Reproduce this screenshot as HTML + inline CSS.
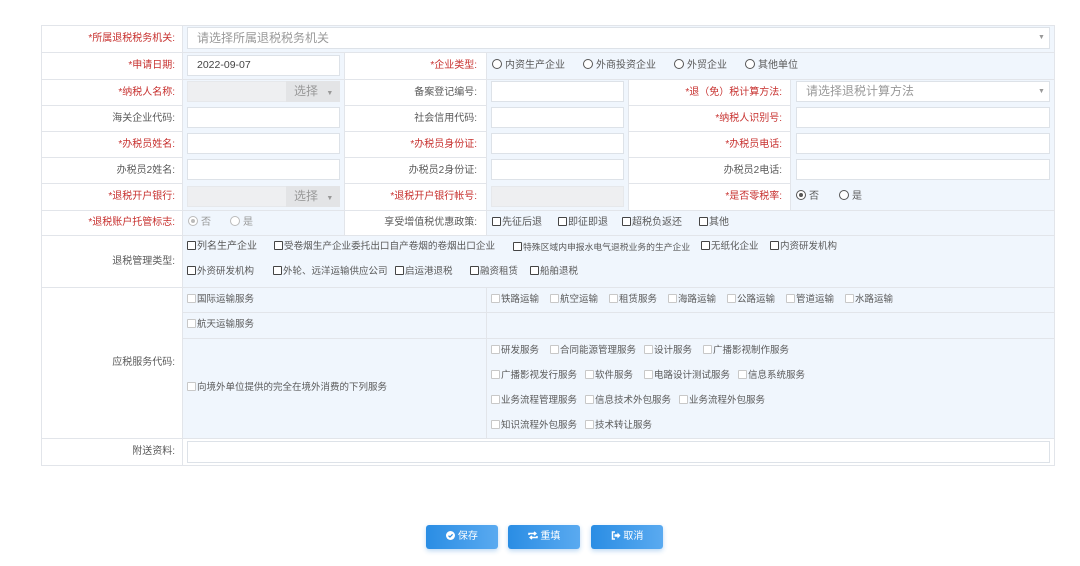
<!DOCTYPE html><html><head><meta charset="utf-8"><style>
*{box-sizing:border-box;margin:0;padding:0}
body{width:1080px;height:566px;background:#fff;position:relative;overflow:hidden;font-family:"Liberation Sans","Noto Sans CJK SC",sans-serif;font-size:10px;color:#5a5a5a}
.c{position:absolute;border:1px solid #e2e5ea;background:#fff}
.v{background:#f0f6fd}
.l{position:absolute;text-align:right;white-space:nowrap}
.r{color:#c7302e}
.t{position:absolute;white-space:nowrap}
.in{position:absolute;background:#fff;border:1px solid #dde2e8}
.dis{background:#eeeff1;border-color:#e6e8eb}
.cb{display:inline-block;width:9px;height:9px;border:1px solid #444;border-radius:1px;vertical-align:-1px;margin-right:1px;background:#fff}
.cd{border-color:#c8c8c8}
.rd{display:inline-block;width:10px;height:10px;border:1px solid #555;border-radius:50%;vertical-align:-1px;margin-right:3px;background:#fff;position:relative}
.rd.on::after{content:"";position:absolute;left:2px;top:2px;width:4px;height:4px;border-radius:50%;background:#555}
.rd.g{border-color:#bbb}.rd.g.on::after{background:#bbb}
.btn{position:absolute;top:525px;width:72px;height:24px;border-radius:3px;background:linear-gradient(90deg,#2a8de4,#5aaaf0);color:#fff;font-size:10px;text-align:center;line-height:24px;box-shadow:0 2px 5px rgba(40,130,220,.3)}
</style></head><body>
<div class="c" style="left:41px;top:25px;width:1014px;height:441px;border-color:#dde1e6"></div>
<div class="c v" style="left:182px;top:25px;width:873px;height:28px"></div>
<div class="c v" style="left:182px;top:52px;width:163px;height:28px"></div>
<div class="c" style="left:344px;top:52px;width:143px;height:28px"></div>
<div class="c v" style="left:486px;top:52px;width:569px;height:28px"></div>
<div class="c v" style="left:182px;top:79px;width:163px;height:132px"></div>
<div class="c v" style="left:486px;top:79px;width:143px;height:132px"></div>
<div class="c v" style="left:790px;top:79px;width:265px;height:132px"></div>
<div class="c" style="left:41px;top:79px;width:142px;height:27px"></div>
<div class="c" style="left:41px;top:105px;width:142px;height:27px"></div>
<div class="c" style="left:41px;top:131px;width:142px;height:27px"></div>
<div class="c" style="left:41px;top:157px;width:142px;height:27px"></div>
<div class="c" style="left:41px;top:183px;width:142px;height:28px"></div>
<div class="c" style="left:41px;top:210px;width:142px;height:26px"></div>
<div class="c" style="left:41px;top:25px;width:142px;height:28px"></div>
<div class="c" style="left:41px;top:52px;width:142px;height:28px"></div>
<div class="c" style="left:344px;top:79px;width:143px;height:27px"></div>
<div class="c" style="left:344px;top:105px;width:143px;height:27px"></div>
<div class="c" style="left:344px;top:131px;width:143px;height:27px"></div>
<div class="c" style="left:344px;top:157px;width:143px;height:27px"></div>
<div class="c" style="left:344px;top:183px;width:143px;height:28px"></div>
<div class="c" style="left:628px;top:79px;width:163px;height:27px"></div>
<div class="c" style="left:628px;top:105px;width:163px;height:27px"></div>
<div class="c" style="left:628px;top:131px;width:163px;height:27px"></div>
<div class="c" style="left:628px;top:157px;width:163px;height:27px"></div>
<div class="c" style="left:628px;top:183px;width:163px;height:28px"></div>
<div class="c v" style="left:182px;top:210px;width:163px;height:26px"></div>
<div class="c" style="left:344px;top:210px;width:143px;height:26px"></div>
<div class="c v" style="left:486px;top:210px;width:569px;height:26px"></div>
<div class="c" style="left:41px;top:235px;width:142px;height:53px"></div>
<div class="c v" style="left:182px;top:235px;width:873px;height:53px"></div>
<div class="c" style="left:41px;top:287px;width:142px;height:152px"></div>
<div class="c v" style="left:182px;top:287px;width:305px;height:26px"></div>
<div class="c v" style="left:486px;top:287px;width:569px;height:26px"></div>
<div class="c v" style="left:182px;top:312px;width:305px;height:27px"></div>
<div class="c v" style="left:486px;top:312px;width:569px;height:27px"></div>
<div class="c v" style="left:182px;top:338px;width:305px;height:101px"></div>
<div class="c v" style="left:486px;top:338px;width:569px;height:101px"></div>
<div class="c" style="left:41px;top:438px;width:142px;height:28px"></div>
<div class="c" style="left:182px;top:438px;width:873px;height:28px"></div>

<div class="in" style="left:187px;top:27px;width:863px;height:22px"></div>
<div class="t" style="left:197px;top:27px;line-height:22px;font-size:12px;color:#999">请选择所属退税税务机关</div>
<div class="t" style="left:1038px;top:27px;line-height:22px;font-size:7px;color:#999">▼</div>
<div class="in" style="left:187px;top:55px;width:153px;height:21px"></div>
<div class="t" style="left:197px;top:55px;line-height:21px;font-size:10.5px;color:#444">2022-09-07</div>
<div class="in dis" style="left:187px;top:81px;width:153px;height:21px"></div>
<div class="t" style="left:286px;top:81px;width:54px;height:21px;background:#e3e4e6;line-height:21px;font-size:12px;color:#999;padding-left:8px">选择 <span style="font-size:7px;margin-left:5px">▼</span></div>
<div class="in" style="left:187px;top:107px;width:153px;height:21px"></div>
<div class="in" style="left:187px;top:133px;width:153px;height:21px"></div>
<div class="in" style="left:187px;top:159px;width:153px;height:21px"></div>
<div class="in dis" style="left:187px;top:186px;width:153px;height:21px"></div>
<div class="t" style="left:286px;top:186px;width:54px;height:21px;background:#e3e4e6;line-height:21px;font-size:12px;color:#999;padding-left:8px">选择 <span style="font-size:7px;margin-left:5px">▼</span></div>
<div class="in" style="left:491px;top:81px;width:133px;height:21px"></div>
<div class="in" style="left:491px;top:107px;width:133px;height:21px"></div>
<div class="in" style="left:491px;top:133px;width:133px;height:21px"></div>
<div class="in" style="left:491px;top:159px;width:133px;height:21px"></div>
<div class="in dis" style="left:491px;top:186px;width:133px;height:21px"></div>
<div class="in" style="left:796px;top:81px;width:254px;height:21px"></div>
<div class="t" style="left:806px;top:81px;line-height:21px;font-size:12px;color:#999">请选择退税计算方法</div>
<div class="t" style="left:1038px;top:81px;line-height:21px;font-size:7px;color:#999">▼</div>
<div class="in" style="left:796px;top:107px;width:254px;height:21px"></div>
<div class="in" style="left:796px;top:133px;width:254px;height:21px"></div>
<div class="in" style="left:796px;top:159px;width:254px;height:21px"></div>
<div class="in" style="left:187px;top:441px;width:863px;height:22px"></div>

<div class="l r" style="left:41px;width:134px;top:25px;line-height:28px">*所属退税税务机关:</div>
<div class="l r" style="left:41px;width:134px;top:52px;line-height:28px">*申请日期:</div>
<div class="l r" style="left:41px;width:134px;top:79px;line-height:27px">*纳税人名称:</div>
<div class="l" style="left:41px;width:134px;top:105px;line-height:27px">海关企业代码:</div>
<div class="l r" style="left:41px;width:134px;top:131px;line-height:27px">*办税员姓名:</div>
<div class="l" style="left:41px;width:134px;top:157px;line-height:27px">办税员2姓名:</div>
<div class="l r" style="left:41px;width:134px;top:183px;line-height:28px">*退税开户银行:</div>
<div class="l r" style="left:41px;width:134px;top:210px;line-height:26px">*退税账户托管标志:</div>
<div class="l" style="left:41px;width:134px;top:235px;line-height:53px">退税管理类型:</div>
<div class="l" style="left:41px;width:134px;top:287px;line-height:152px">应税服务代码:</div>
<div class="l" style="left:41px;width:134px;top:438px;line-height:28px">附送资料:</div>
<div class="l r" style="left:344px;width:133px;top:52px;line-height:28px">*企业类型:</div>
<div class="l" style="left:344px;width:133px;top:79px;line-height:27px">备案登记编号:</div>
<div class="l" style="left:344px;width:133px;top:105px;line-height:27px">社会信用代码:</div>
<div class="l r" style="left:344px;width:133px;top:131px;line-height:27px">*办税员身份证:</div>
<div class="l" style="left:344px;width:133px;top:157px;line-height:27px">办税员2身份证:</div>
<div class="l r" style="left:344px;width:133px;top:183px;line-height:28px">*退税开户银行帐号:</div>
<div class="l" style="left:344px;width:133px;top:210px;line-height:26px">享受增值税优惠政策:</div>
<div class="l r" style="left:628px;width:154px;top:79px;line-height:27px">*退（免）税计算方法:</div>
<div class="l r" style="left:628px;width:154px;top:105px;line-height:27px">*纳税人识别号:</div>
<div class="l r" style="left:628px;width:154px;top:131px;line-height:27px">*办税员电话:</div>
<div class="l" style="left:628px;width:154px;top:157px;line-height:27px">办税员2电话:</div>
<div class="l r" style="left:628px;width:154px;top:183px;line-height:28px">*是否零税率:</div>

<div class="t" style="left:492px;top:52px;line-height:28px"><span class="rd"></span>内资生产企业</div>
<div class="t" style="left:583px;top:52px;line-height:28px"><span class="rd"></span>外商投资企业</div>
<div class="t" style="left:674px;top:52px;line-height:28px"><span class="rd"></span>外贸企业</div>
<div class="t" style="left:745px;top:52px;line-height:28px"><span class="rd"></span>其他单位</div>
<div class="t" style="left:796px;top:183px;line-height:28px"><span class="rd on"></span>否</div>
<div class="t" style="left:839px;top:183px;line-height:28px"><span class="rd"></span>是</div>
<div class="t" style="left:188px;top:210px;line-height:26px;color:#999"><span class="rd g on"></span>否</div>
<div class="t" style="left:230px;top:210px;line-height:26px;color:#999"><span class="rd g"></span>是</div>

<div class="t" style="left:492px;top:210px;line-height:26px"><span class="cb"></span>先征后退</div>
<div class="t" style="left:558px;top:210px;line-height:26px"><span class="cb"></span>即征即退</div>
<div class="t" style="left:622px;top:210px;line-height:26px"><span class="cb"></span>超税负返还</div>
<div class="t" style="left:699px;top:210px;line-height:26px"><span class="cb"></span>其他</div>

<div class="t" style="left:187px;top:236px;line-height:22px"><span class="cb"></span>列名生产企业</div>
<div class="t" style="left:274px;top:236px;line-height:22px;font-size:9.6px"><span class="cb"></span>受卷烟生产企业委托出口自产卷烟的卷烟出口企业</div>
<div class="t" style="left:513px;top:236px;line-height:22px;font-size:8.8px"><span class="cb"></span>特殊区域内申报水电气退税业务的生产企业</div>
<div class="t" style="left:701px;top:236px;line-height:22px;font-size:9.5px"><span class="cb"></span>无纸化企业</div>
<div class="t" style="left:770px;top:236px;line-height:22px;font-size:9.5px"><span class="cb"></span>内资研发机构</div>
<div class="t" style="left:187px;top:261px;line-height:22px;font-size:9.5px"><span class="cb"></span>外资研发机构</div>
<div class="t" style="left:273px;top:261px;line-height:22px;font-size:9.5px"><span class="cb"></span>外轮、远洋运输供应公司</div>
<div class="t" style="left:395px;top:261px;line-height:22px;font-size:9.5px"><span class="cb"></span>启运港退税</div>
<div class="t" style="left:470px;top:261px;line-height:22px;font-size:9.5px"><span class="cb"></span>融资租赁</div>
<div class="t" style="left:530px;top:261px;line-height:22px;font-size:9.5px"><span class="cb"></span>船舶退税</div>

<div class="t" style="left:187px;top:287px;line-height:26px;font-size:9.5px"><span class="cb cd"></span>国际运输服务</div>
<div class="t" style="left:187px;top:312px;line-height:26px;font-size:9.5px"><span class="cb cd"></span>航天运输服务</div>
<div class="t" style="left:187px;top:338px;line-height:100px;font-size:9.5px"><span class="cb cd"></span>向境外单位提供的完全在境外消费的下列服务</div>

<div class="t" style="left:491px;top:287px;line-height:26px;font-size:9.5px"><span class="cb cd"></span>铁路运输</div>
<div class="t" style="left:550px;top:287px;line-height:26px;font-size:9.5px"><span class="cb cd"></span>航空运输</div>
<div class="t" style="left:609px;top:287px;line-height:26px;font-size:9.5px"><span class="cb cd"></span>租赁服务</div>
<div class="t" style="left:668px;top:287px;line-height:26px;font-size:9.5px"><span class="cb cd"></span>海路运输</div>
<div class="t" style="left:727px;top:287px;line-height:26px;font-size:9.5px"><span class="cb cd"></span>公路运输</div>
<div class="t" style="left:786px;top:287px;line-height:26px;font-size:9.5px"><span class="cb cd"></span>管道运输</div>
<div class="t" style="left:845px;top:287px;line-height:26px;font-size:9.5px"><span class="cb cd"></span>水路运输</div>

<div class="t" style="left:491px;top:340px;line-height:22px;font-size:9.5px"><span class="cb cd"></span>研发服务</div>
<div class="t" style="left:550px;top:340px;line-height:22px;font-size:9.5px"><span class="cb cd"></span>合同能源管理服务</div>
<div class="t" style="left:644px;top:340px;line-height:22px;font-size:9.5px"><span class="cb cd"></span>设计服务</div>
<div class="t" style="left:703px;top:340px;line-height:22px;font-size:9.5px"><span class="cb cd"></span>广播影视制作服务</div>
<div class="t" style="left:491px;top:365px;line-height:22px;font-size:9.5px"><span class="cb cd"></span>广播影视发行服务</div>
<div class="t" style="left:585px;top:365px;line-height:22px;font-size:9.5px"><span class="cb cd"></span>软件服务</div>
<div class="t" style="left:644px;top:365px;line-height:22px;font-size:9.5px"><span class="cb cd"></span>电路设计测试服务</div>
<div class="t" style="left:738px;top:365px;line-height:22px;font-size:9.5px"><span class="cb cd"></span>信息系统服务</div>
<div class="t" style="left:491px;top:390px;line-height:22px;font-size:9.5px"><span class="cb cd"></span>业务流程管理服务</div>
<div class="t" style="left:585px;top:390px;line-height:22px;font-size:9.5px"><span class="cb cd"></span>信息技术外包服务</div>
<div class="t" style="left:679px;top:390px;line-height:22px;font-size:9.5px"><span class="cb cd"></span>业务流程外包服务</div>
<div class="t" style="left:491px;top:415px;line-height:22px;font-size:9.5px"><span class="cb cd"></span>知识流程外包服务</div>
<div class="t" style="left:585px;top:415px;line-height:22px;font-size:9.5px"><span class="cb cd"></span>技术转让服务</div>

<div class="btn" style="left:426px"><svg width="9" height="9" viewBox="0 0 10 10" style="vertical-align:-1px"><circle cx="5" cy="5" r="5" fill="#fff"/><path d="M2.8 5.2l1.6 1.5 2.9-3" stroke="#2a8de4" stroke-width="1.4" fill="none"/></svg> 保存</div>
<div class="btn" style="left:508px"><svg width="10" height="9" viewBox="0 0 10 9" style="vertical-align:-1px"><path d="M1 4V2.5h6.5M6 1l1.8 1.5L6 4M9 5v1.5H2.5M4 8L2.2 6.5 4 5" stroke="#fff" stroke-width="1.5" fill="none"/></svg> 重填</div>
<div class="btn" style="left:591px"><svg width="10" height="9" viewBox="0 0 10 9" style="vertical-align:-1px"><path d="M4 1H1.5v7H4" stroke="#fff" stroke-width="1.5" fill="none"/><path d="M3.5 3.3h3V1.5L9.5 4.5 6.5 7.5V5.7h-3z" fill="#fff"/></svg> 取消</div>
</body></html>
